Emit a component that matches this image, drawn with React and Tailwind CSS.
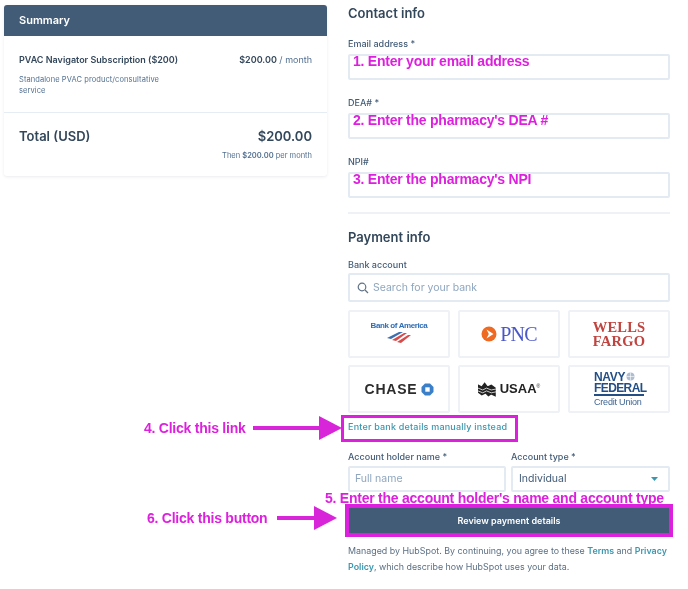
const font = { fontFamily: '"Inter", "Liberation Sans", sans-serif' };

function Field({ label, note, className = "" }) {
  return (
    <div className={className}>
      <div className="h-[20px] text-[9px] leading-[20px] font-medium text-[#425b76]">{label}</div>
      <div className="h-[26px] rounded-[2px] border-2 border-[#e3eaf2] bg-white pl-[3px] font-['Liberation_Sans'] text-[14px] leading-[11px] font-bold tracking-[-0.24px] text-[#dd20dd]">
        {note}
      </div>
    </div>
  );
}

function Tile({ children }) {
  return (
    <div className="flex h-[48px] items-center justify-center rounded-[2px] border-2 border-[#eef1f5] bg-white">
      {children}
    </div>
  );
}

function Arrow({ length }) {
  return (
    <svg width={length} height="24" viewBox={`0 0 ${length} 24`} className="block">
      <rect x="0" y="10" width={length - 20} height="4" fill="#d925d9" />
      <polygon points={`${length - 23},0 ${length},12 ${length - 23},24`} fill="#d925d9" />
    </svg>
  );
}

export default function App() {
  return (
    <div className="relative flex h-[589px] w-[688px] items-start overflow-hidden bg-white text-[#33475b] blur-[0.35px]" style={font}>
      <section className="ml-[4px] mt-[5px] h-[171px] w-[323px] rounded-[3px] bg-white shadow-[0_1px_3px_rgba(45,62,80,0.1)]">
        <div className="flex h-[31px] items-center rounded-t-[3px] bg-[#425b76] px-[15px] text-[11px] font-semibold text-white">Summary</div>
        <div className="h-[77px] border-b border-[#e6ecf3] px-[15px] pt-[18px]">
          <div className="flex justify-between text-[9px] leading-[12px]">
            <span className="font-semibold">PVAC Navigator Subscription ($200)</span>
            <span className="text-[#516f90]"><b className="font-semibold text-[#33475b]">$200.00</b> / month</span>
          </div>
          <p className="mt-[8px] w-[160px] text-[7.5px] leading-[11px] tracking-[0.08px] text-[#516f90]">Standalone PVAC product/consultative service</p>
        </div>
        <div className="px-[15px] pt-[14px]">
          <div className="flex justify-between text-[13px] leading-[18px] font-semibold">
            <span>Total (USD)</span>
            <span>$200.00</span>
          </div>
          <p className="mt-[5px] text-right text-[7.5px] leading-[11px] text-[#516f90]">Then <b className="font-semibold">$200.00</b> per month</p>
        </div>
      </section>

      <main className="ml-[21px] w-[322px]">
        <h2 className="mt-[4px] h-[18px] text-[13px] leading-[18px] font-semibold">Contact info</h2>
        <Field className="mt-[12px]" label="Email address *" note="1. Enter your email address" />
        <Field className="mt-[13px]" label="DEA# *" note="2. Enter the pharmacy's DEA #" />
        <Field className="mt-[13px]" label="NPI#" note="3. Enter the pharmacy's NPI" />
        <div className="mt-[14px] h-[2px] bg-[#eef2f7]" />

        <h2 className="mt-[14px] h-[18px] text-[13px] leading-[18px] font-semibold">Payment info</h2>
        <div className="mt-[12px] h-[14px] text-[9px] leading-[14px] font-medium text-[#425b76]">Bank account</div>
        <div className="mt-[1px] flex h-[29px] items-center gap-[4px] rounded-[2px] border-2 border-[#e3eaf2] px-[7px] text-[10.5px] text-[#8fa6bf]">
          <svg width="12" height="12" viewBox="0 0 12 12" fill="none" stroke="#5f7287" strokeWidth="1.2"><circle cx="5" cy="5" r="3.8" /><path d="M8 8l3 3" /></svg>
          Search for your bank
        </div>

        <div className="mt-[8px] grid grid-cols-3 gap-x-[8px] gap-y-[7px]">
          <Tile>
            <div className="-mt-[3px] flex flex-col items-center">
              <span className="font-['Liberation_Sans'] text-[8px] leading-[9px] font-bold tracking-[-0.4px] text-[#2f6db5]">Bank of America</span>
              <svg width="26" height="13" viewBox="0 0 26 13" className="mt-[1px]">
                <path d="M1 7L13 1h4L5 8z" fill="#3e6fb2" /><path d="M6 9L18 2h3L10 10z" fill="#d84b4b" /><path d="M11 11L22 4h3L15 12z" fill="#d84b4b" />
              </svg>
            </div>
          </Tile>
          <Tile>
            <div className="flex items-center gap-[3px]">
              <svg width="16" height="16" viewBox="0 0 16 16"><circle cx="8" cy="8" r="7.5" fill="#ee6a22" /><path d="M5.5 3.5L12.5 8l-7 4.5 2.3-4.5z" fill="#fff" /></svg>
              <span className="font-['Liberation_Serif'] text-[20px] leading-[20px] tracking-[-0.8px] text-[#4a57c9]">PNC</span>
            </div>
          </Tile>
          <Tile>
            <div className="text-center font-['Liberation_Serif'] text-[14.5px] leading-[14px] font-bold tracking-[0.2px] text-[#c0443f]">WELLS<br />FARGO</div>
          </Tile>
          <Tile>
            <div className="flex items-center gap-[3px]">
              <span className="font-['Liberation_Sans'] text-[14px] leading-[14px] font-bold tracking-[0.8px] text-[#2d2d2d]">CHASE</span>
              <svg width="13" height="13" viewBox="0 0 13 13"><path d="M4 0.5h5L12.5 4v5L9 12.5H4L0.5 9V4z" fill="#3b7fc9" /><rect x="4.3" y="4.3" width="4.4" height="4.4" fill="#fff" /></svg>
            </div>
          </Tile>
          <Tile>
            <div className="flex items-center gap-[4px]">
              <svg width="18" height="15" viewBox="0 0 19 15" fill="none" stroke="#222" strokeWidth="1.5"><path d="M0 3l4 2 3-4 3 4 4-2 4 3v8l-4-2-3 2-3-3-4 2-4-3z" fill="#222" /><path d="M0 6l5 2 4-2 5 2 5-1M0 9l5 2 4-2 5 2 5-1" stroke="#fff" strokeWidth="0.8" /></svg>
              <span className="font-['Liberation_Sans'] text-[13px] leading-[14px] font-bold text-[#222]">USAA</span>
              <span className="-ml-[4px] -mt-[6px] font-['Liberation_Sans'] text-[5px] leading-[6px] text-[#222]">®</span>
            </div>
          </Tile>
          <Tile>
            <div className="relative flex w-[50px] flex-col font-['Liberation_Sans'] text-[#234f86]">
              <span className="text-[12px] leading-[11px] font-bold tracking-[-0.3px]">NAVY</span>
              <span className="whitespace-nowrap border-b-2 border-[#234f86] text-[12px] leading-[11px] font-bold tracking-[-0.6px]">FEDERAL</span>
              <span className="mt-[1px] whitespace-nowrap text-[9px] leading-[10px] tracking-[-0.2px] text-[#3f6591]">Credit Union</span>
              <svg width="9" height="9" viewBox="0 0 9 9" className="absolute left-[32px] top-0"><circle cx="4.5" cy="4.5" r="4" fill="#aebdd0" /><path d="M0.5 4.5h8M4.5 0.5v8" stroke="#fff" strokeWidth="0.6" /></svg>
            </div>
          </Tile>
        </div>

        <div className="mt-[7px] h-[14px] text-[9px] leading-[14px] font-medium tracking-[0.2px] text-[#3b97b0]">Enter bank details manually instead</div>
        <div className="mt-[15px] grid grid-cols-[158px_159px] gap-x-[5px]">
          <div>
            <div className="h-[15px] text-[9px] leading-[15px] font-medium text-[#425b76]">Account holder name *</div>
            <div className="mt-[2px] flex h-[26px] items-center rounded-[2px] border-2 border-[#e3eaf2] px-[5px] text-[10.5px] text-[#8fa6bf]">Full name</div>
          </div>
          <div>
            <div className="h-[15px] text-[9px] leading-[15px] font-medium text-[#425b76]">Account type *</div>
            <div className="mt-[2px] flex h-[26px] items-center justify-between rounded-[2px] border-2 border-[#e3eaf2] pl-[6px] pr-[10px] text-[10.5px] text-[#425b76]">
              Individual
              <svg width="7" height="4" viewBox="0 0 7 4"><path d="M0 0h7L3.5 4z" fill="#3b97b0" /></svg>
            </div>
          </div>
        </div>

        <button className="mt-[16px] flex h-[26px] w-[322px] items-center justify-center bg-[#425b76] text-[9px] font-semibold text-white">Review payment details</button>
        <p className="-mr-[6px] mt-[9px] text-[8.9px] leading-[15.5px] text-[#5b6f84]">
          Managed by HubSpot. By continuing, you agree to these <b className="font-semibold text-[#3b97b0]">Terms</b> and <b className="font-semibold text-[#3b97b0]">Privacy Policy</b>, which describe how HubSpot uses your data.
        </p>
      </main>

      <div className="absolute left-[341px] top-[415px] h-[27px] w-[177px] border-[3px] border-[#dd20dd]" />
      <div className="absolute left-[345px] top-[504px] h-[33px] w-[328px] border-[4px] border-[#dd20dd]" />
      <div className="absolute left-[325px] top-[490px] whitespace-nowrap font-['Liberation_Sans'] text-[14px] leading-[16px] font-bold tracking-[-0.24px] text-[#dd20dd]">5. Enter the account holder's name and account type</div>
      <div className="absolute left-[144px] top-[416px] flex items-center gap-[7px] font-['Liberation_Sans'] text-[14px] leading-[16px] font-bold tracking-[-0.24px] whitespace-nowrap text-[#dd20dd]">
        4. Click this link <Arrow length={89} />
      </div>
      <div className="absolute left-[147px] top-[506px] flex items-center gap-[10px] font-['Liberation_Sans'] text-[14px] leading-[16px] font-bold tracking-[-0.24px] whitespace-nowrap text-[#dd20dd]">
        6. Click this button <Arrow length={60} />
      </div>
    </div>
  );
}
